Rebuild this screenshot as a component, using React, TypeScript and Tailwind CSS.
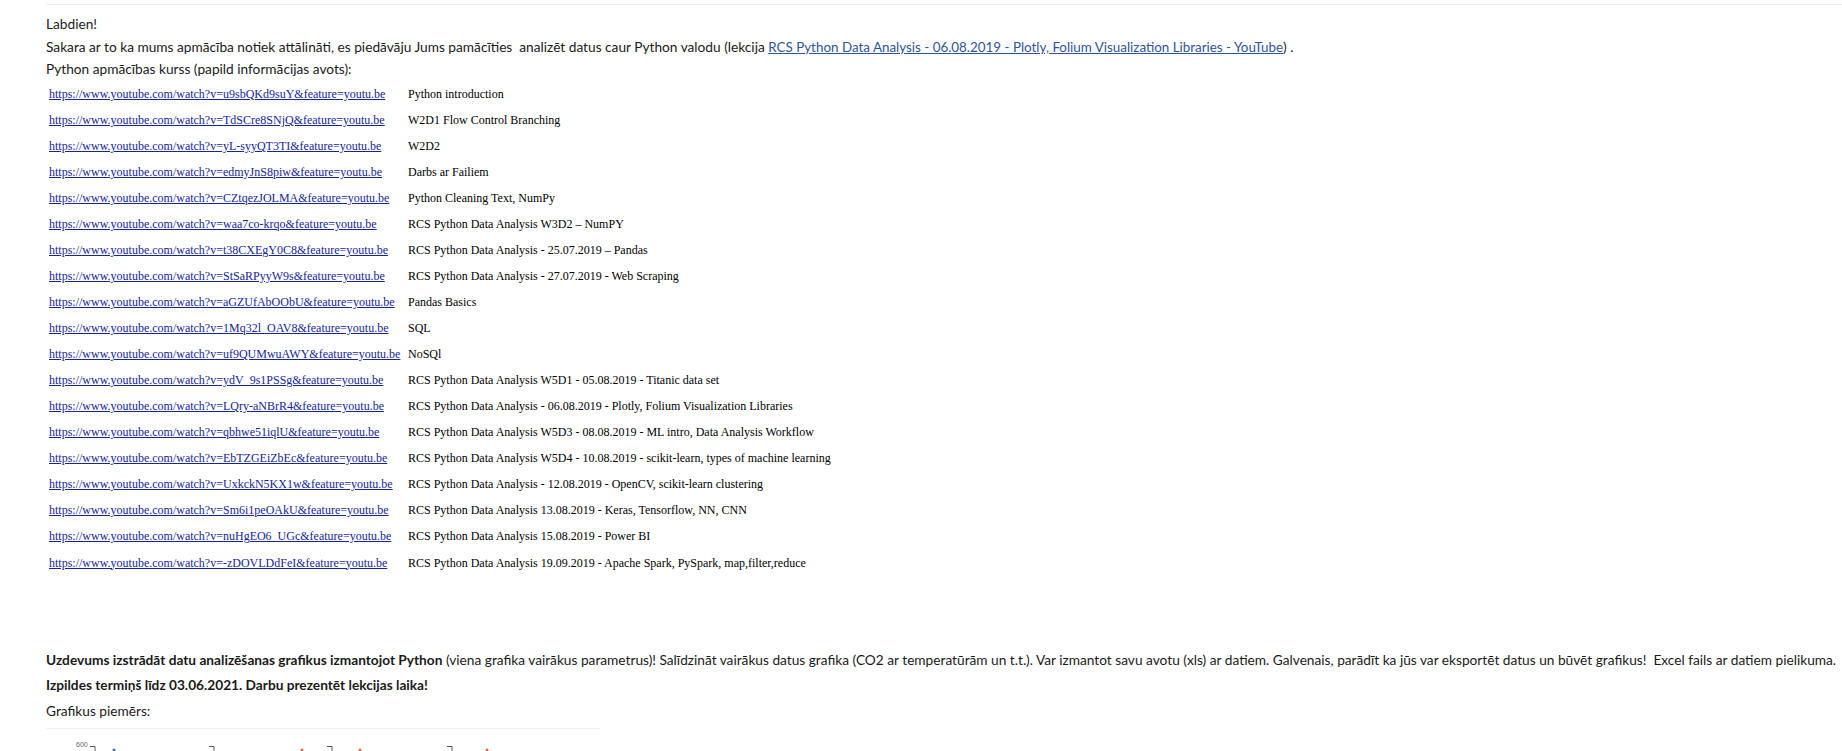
import React from 'react';

const lessons = [
  ['u9sbQKd9suY', 'Python introduction'],
  ['TdSCre8SNjQ', 'W2D1 Flow Control Branching'],
  ['yL-syyQT3TI', 'W2D2'],
  ['edmyJnS8piw', 'Darbs ar Failiem'],
  ['CZtqezJOLMA', 'Python Cleaning Text, NumPy'],
  ['waa7co-krqo', 'RCS Python Data Analysis W3D2 – NumPY'],
  ['t38CXEgY0C8', 'RCS Python Data Analysis - 25.07.2019 – Pandas'],
  ['StSaRPyyW9s', 'RCS Python Data Analysis - 27.07.2019 - Web Scraping'],
  ['aGZUfAbOObU', 'Pandas Basics'],
  ['1Mq32l_OAV8', 'SQL'],
  ['uf9QUMwuAWY', 'NoSQl'],
  ['ydV_9s1PSSg', 'RCS Python Data Analysis W5D1 - 05.08.2019 - Titanic data set'],
  ['LQry-aNBrR4', 'RCS Python Data Analysis - 06.08.2019 - Plotly, Folium Visualization Libraries'],
  ['qbhwe51iqlU', 'RCS Python Data Analysis W5D3 - 08.08.2019 - ML intro, Data Analysis Workflow'],
  ['EbTZGEiZbEc', 'RCS Python Data Analysis W5D4 - 10.08.2019 - scikit-learn, types of machine learning'],
  ['UxkckN5KX1w', 'RCS Python Data Analysis - 12.08.2019 - OpenCV, scikit-learn clustering'],
  ['Sm6i1peOAkU', 'RCS Python Data Analysis 13.08.2019 - Keras, Tensorflow, NN, CNN'],
  ['nuHgEO6_UGc', 'RCS Python Data Analysis 15.08.2019 - Power BI'],
  ['-zDOVLDdFeI', 'RCS Python Data Analysis 19.09.2019 - Apache Spark, PySpark, map,filter,reduce'],
];

export default function App() {
  return (
    <div className="h-[751px] overflow-hidden bg-white pl-[46px] pt-1 font-['Lato',sans-serif] text-[13.7px] text-[#1a1a1a]">
      <div className="h-px bg-[#eeeeee]" />

      {/* Ievads */}
      <p className="mt-[8px] leading-[22px]">Labdien!</p>
      <p className="leading-[23px] whitespace-pre">
        Sakara ar to ka mums apmācība notiek attālināti, es piedāvāju Jums pamācīties{'  '}analizēt datus caur Python valodu (lekcija{' '}
        <a href="#" className="text-[13.4px] leading-none text-[#2f5496] underline">
          RCS Python Data Analysis - 06.08.2019 - Plotly, Folium Visualization Libraries - YouTube
        </a>
        ) .
      </p>
      <p className="leading-[22px]">Python apmācības kurss (papild informācijas avots):</p>

      {/* Saites */}
      <table className="mt-[1px] border-collapse font-['Liberation_Serif',serif] text-[12px] leading-[14px] text-black">
        <tbody>
          {lessons.map(([id, title], i) => (
            <tr key={id} className={i === lessons.length - 1 ? 'h-[27px]' : 'h-[26px]'}>
              <td className="w-[362px] whitespace-nowrap p-0 pl-[3px]">
                <a href="#" className="text-[#14259a] underline">
                  {`https://www.youtube.com/watch?v=${id}&feature=youtu.be`}
                </a>
              </td>
              <td className="whitespace-nowrap p-0">{title}</td>
            </tr>
          ))}
        </tbody>
      </table>

      {/* Uzdevums */}
      <p className="mt-[72px] leading-[24px] whitespace-pre">
        <b>Uzdevums izstrādāt datu analizēšanas grafikus izmantojot Python</b> (viena grafika vairākus parametrus)! Salīdzināt vairākus datus grafika (CO2 ar temperatūrām un t.t.). Var izmantot savu avotu (xls) ar datiem. Galvenais, parādīt ka jūs var eksportēt datus un būvēt grafikus!{'  '}Excel fails ar datiem pielikuma.
      </p>
      <p className="leading-[26px]">
        <b>Izpildes termiņš līdz 03.06.2021. Darbu prezentēt lekcijas laika!</b>
      </p>
      <p className="leading-[25px]">Grafikus piemērs:</p>

      {/* Grafiks */}
      <div className="mt-[5px] w-[554px] border-t border-[#f2f2f2]">
        <svg width="554" height="22" viewBox="0 0 554 22" className="block">
          <text x="30" y="18" fontSize="7" fill="#666666" fontFamily="Liberation Sans, sans-serif">600</text>
          <path d="M44 17.5h5v5M163 17.5h5v5M281 17.5h5v5M401 17.5h5v5" fill="none" stroke="#555555" strokeWidth="1" />
          <circle cx="68" cy="21" r="1.5" fill="#3b6fb5" />
          <circle cx="256" cy="21" r="1.5" fill="#e8663c" />
          <circle cx="314" cy="21" r="1.5" fill="#e8663c" />
          <circle cx="441" cy="21" r="1.5" fill="#e8663c" />
        </svg>
      </div>
    </div>
  );
}
